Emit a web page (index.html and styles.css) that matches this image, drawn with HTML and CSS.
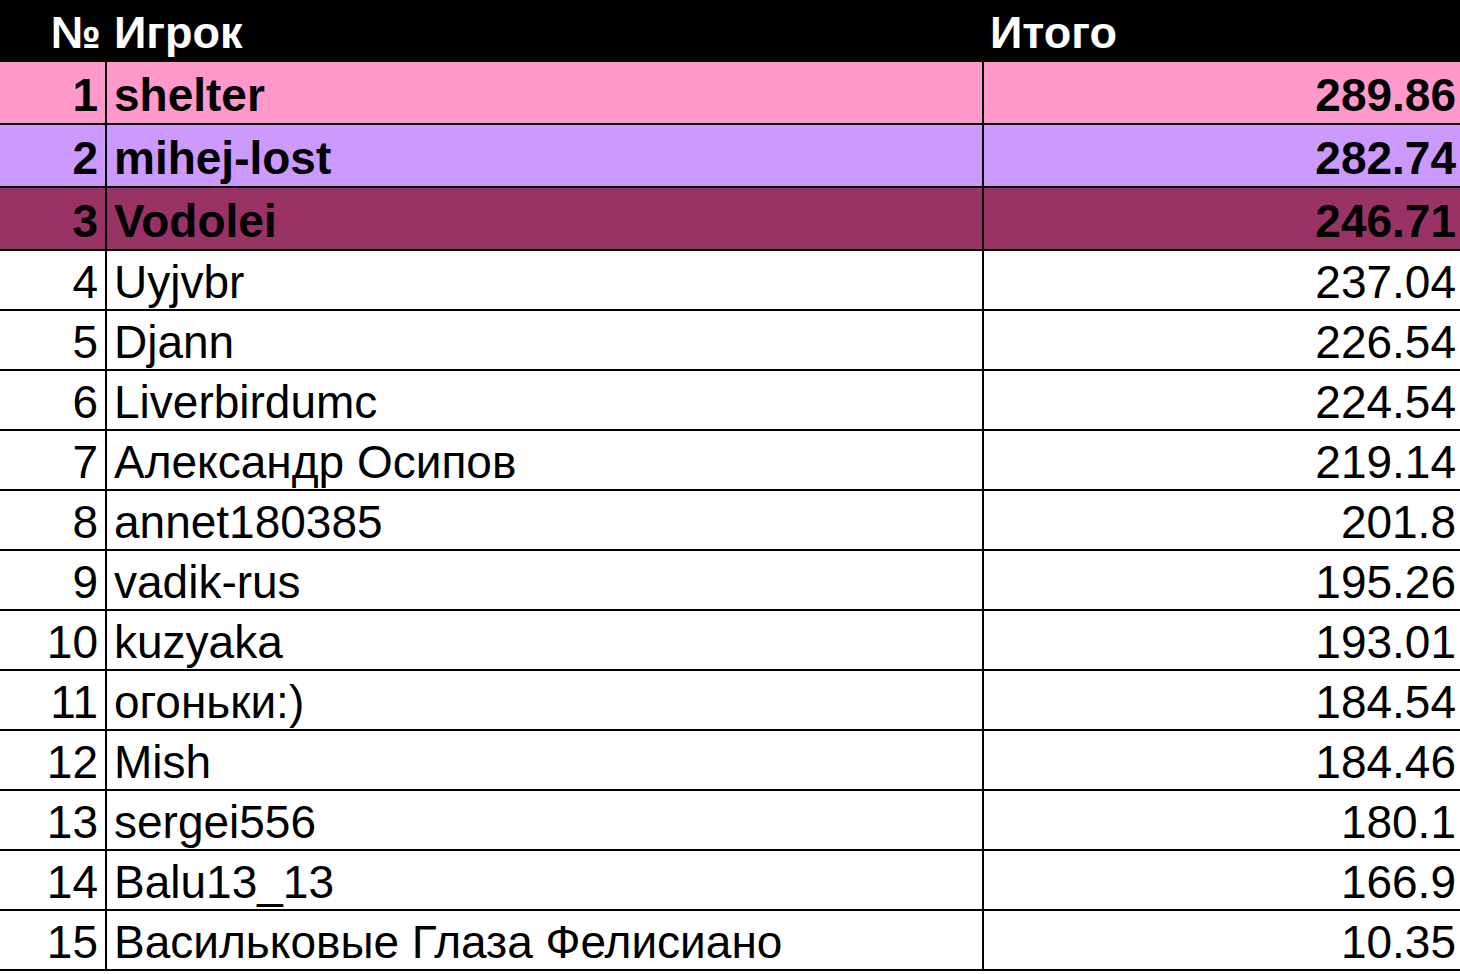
FILE: index.html
```html
<!DOCTYPE html>
<html lang="ru">
<head>
<meta charset="utf-8">
<title>Итого</title>
<link rel="stylesheet" href="styles.css">
</head>
<body>
<div class="sheet">
  <div class="row head">
    <div class="cell num">№</div>
    <div class="cell name">Игрок</div>
    <div class="cell total">Итого</div>
  </div>
  <div class="row top first">
    <div class="cell num">1</div>
    <div class="cell name">shelter</div>
    <div class="cell total">289.86</div>
  </div>
  <div class="row top second">
    <div class="cell num">2</div>
    <div class="cell name">mihej-lost</div>
    <div class="cell total">282.74</div>
  </div>
  <div class="row top third">
    <div class="cell num">3</div>
    <div class="cell name">Vodolei</div>
    <div class="cell total">246.71</div>
  </div>
  <div class="row"><div class="cell num">4</div><div class="cell name">Uyjvbr</div><div class="cell total">237.04</div></div>
  <div class="row"><div class="cell num">5</div><div class="cell name">Djann</div><div class="cell total">226.54</div></div>
  <div class="row"><div class="cell num">6</div><div class="cell name">Liverbirdumc</div><div class="cell total">224.54</div></div>
  <div class="row"><div class="cell num">7</div><div class="cell name">Александр Осипов</div><div class="cell total">219.14</div></div>
  <div class="row"><div class="cell num">8</div><div class="cell name">annet180385</div><div class="cell total">201.8</div></div>
  <div class="row"><div class="cell num">9</div><div class="cell name">vadik-rus</div><div class="cell total">195.26</div></div>
  <div class="row"><div class="cell num">10</div><div class="cell name">kuzyaka</div><div class="cell total">193.01</div></div>
  <div class="row"><div class="cell num">11</div><div class="cell name">огоньки:)</div><div class="cell total">184.54</div></div>
  <div class="row"><div class="cell num">12</div><div class="cell name">Mish</div><div class="cell total">184.46</div></div>
  <div class="row"><div class="cell num">13</div><div class="cell name">sergei556</div><div class="cell total">180.1</div></div>
  <div class="row"><div class="cell num">14</div><div class="cell name">Balu13_13</div><div class="cell total">166.9</div></div>
  <div class="row"><div class="cell num">15</div><div class="cell name">Васильковые Глаза Фелисиано</div><div class="cell total">10.35</div></div>
</div>
</body>
</html>
```
FILE: styles.css
```css
* { box-sizing: border-box; }
html, body {
  margin: 0;
  padding: 0;
  background: #fff;
}
body {
  width: 1460px;
  height: 974px;
  overflow: hidden;
  font-family: "Liberation Sans", Arial, sans-serif;
  color: #000;
}
.sheet {
  display: flex;
  flex-direction: column;
}
.row {
  display: grid;
  grid-template-columns: 107px 877px 1fr;
  height: 60px;
  border-bottom: 2px solid #000;
  font-size: 46px;
  line-height: 1;
}
.cell {
  display: flex;
  align-items: flex-end;
  padding-bottom: 4px;
  border-right: 2px solid #000;
  white-space: nowrap;
  overflow: hidden;
}
.cell:last-child { border-right: none; }
.num { justify-content: flex-end; padding-right: 7px; }
.name { padding-left: 7px; }
.total { justify-content: flex-end; padding-right: 4px; }

.head {
  height: 62px;
  background: #000;
  color: #fff;
  font-weight: bold;
  border-bottom: none;
  font-size: 45px;
}
.head .cell { border-right: none; padding-bottom: 7px; }
.head .num { padding-right: 6px; }
.head .total { justify-content: flex-start; padding-left: 6px; }

.top { height: 63px; font-weight: bold; }
.top .cell { padding-bottom: 5px; }
.first { background: #ff99cc; }
.second { background: #cc99ff; }
.third { background: #993366; }
```
